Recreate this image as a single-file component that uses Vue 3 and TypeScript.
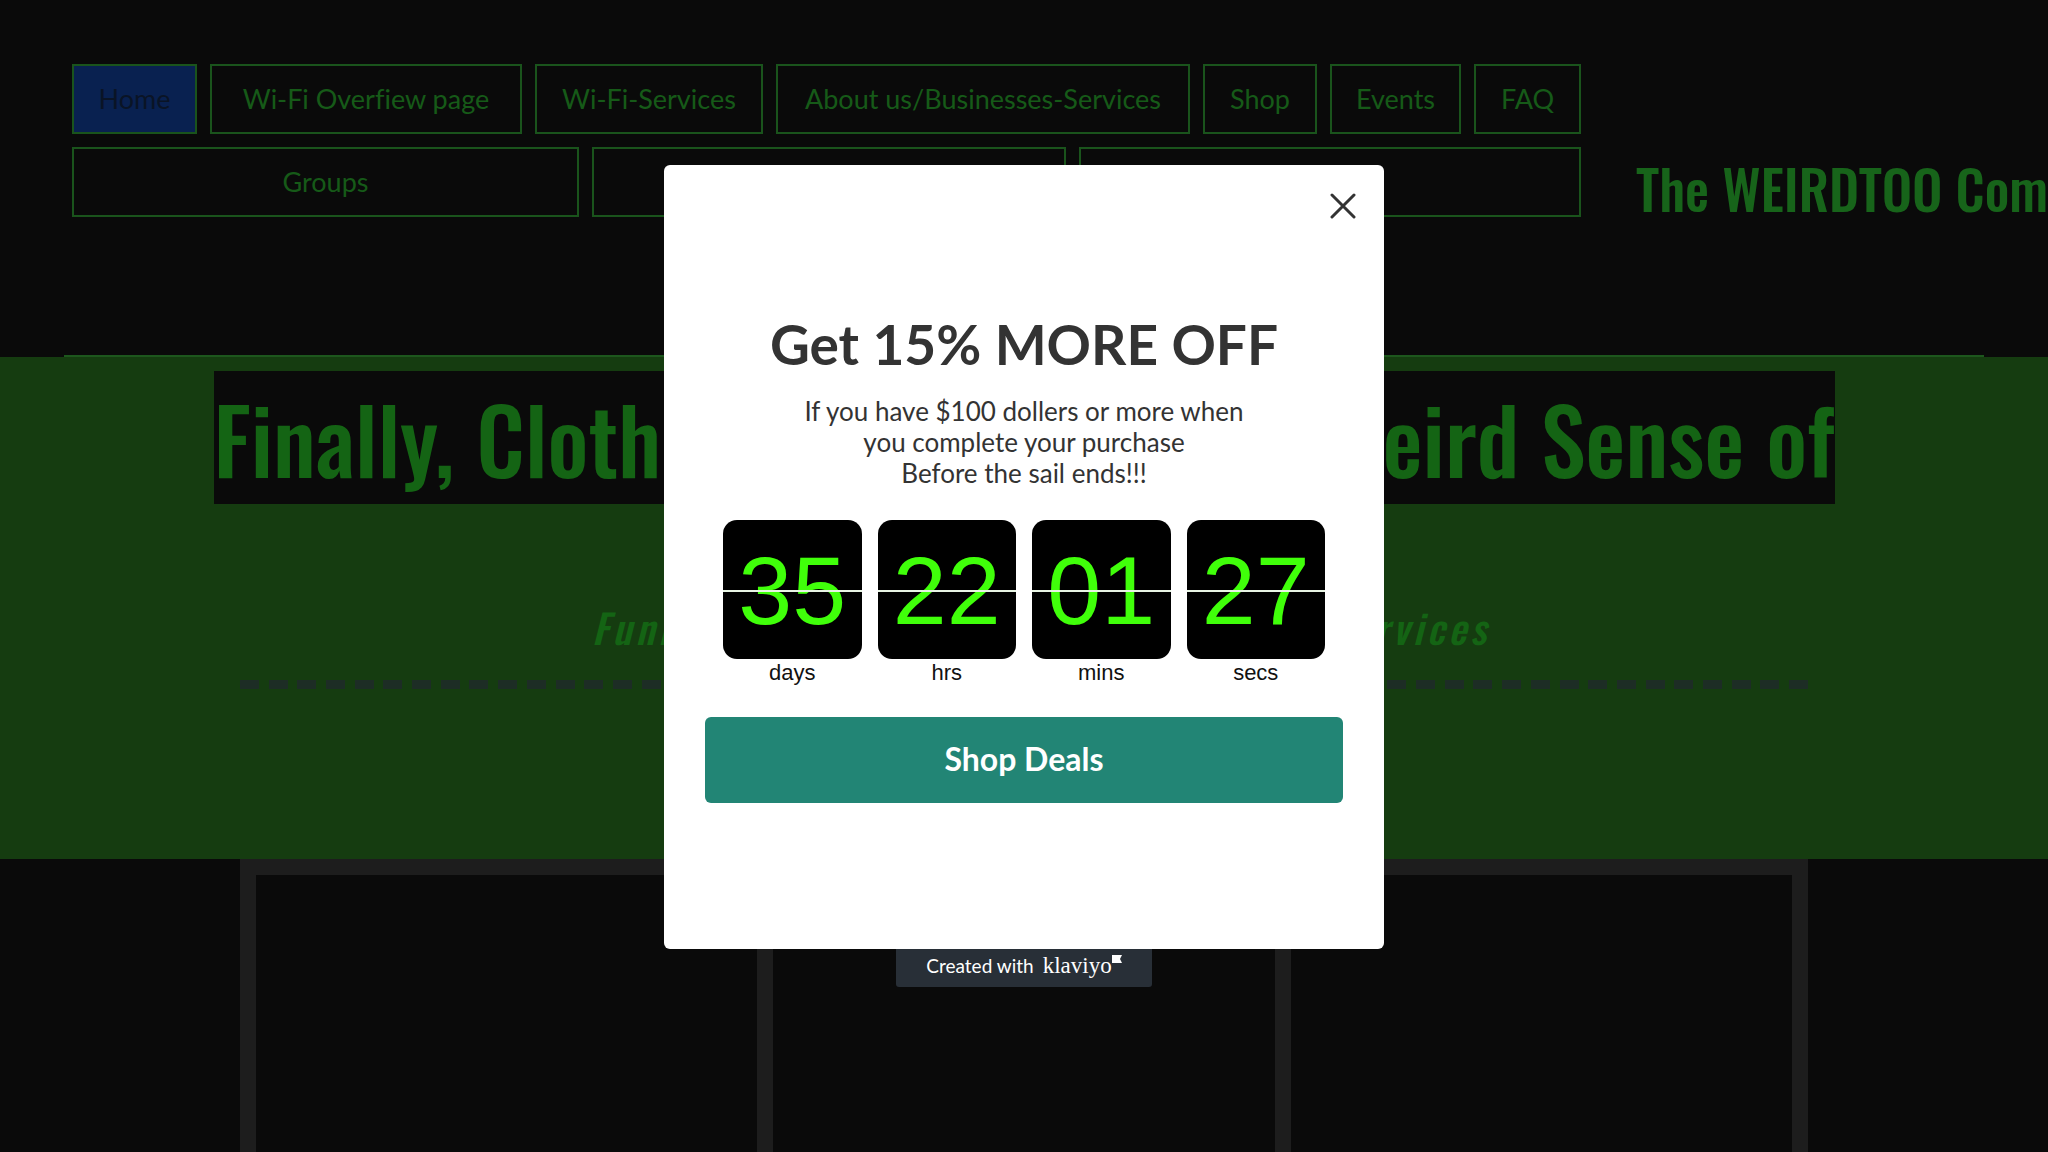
<script setup lang="ts">
interface TimeUnit {
  value: string
  label: string
}

const primaryLinks: string[] = [
  'Home',
  'Wi-Fi Overfiew page',
  'Wi-Fi-Services',
  'About us/Businesses-Services',
  'Shop',
  'Events',
  'FAQ',
]

const secondaryLinks: string[] = ['Groups', '', '']

const countdown: TimeUnit[] = [
  { value: '35', label: 'days' },
  { value: '22', label: 'hrs' },
  { value: '01', label: 'mins' },
  { value: '27', label: 'secs' },
]
</script>

<template>
  <div class="page">
    <header class="site-header">
      <nav class="site-nav">
        <div class="nav-row nav-row-primary">
          <a
            v-for="(link, index) in primaryLinks"
            :key="link"
            href="#"
            class="nav-link"
            :class="{ active: index === 0 }"
          >{{ link }}</a>
        </div>
        <div class="nav-row nav-row-secondary">
          <a v-for="(link, index) in secondaryLinks" :key="index" href="#" class="nav-link">{{ link }}</a>
        </div>
      </nav>
      <a href="#" class="site-title">The WEIRDTOO Com</a>
    </header>

    <section class="hero">
      <h1 class="hero-title"><span>Finally, Cloth</span><span>eird Sense of</span></h1>
      <p class="hero-subtitle"><span>Funn</span><span>rvices</span></p>
      <div class="hero-rule"></div>
    </section>

    <section class="gallery">
      <div v-for="n in 3" :key="n" class="gallery-cell"></div>
    </section>

    <div class="overlay">
      <div class="dialog" role="dialog" aria-labelledby="offer-title">
        <button type="button" class="close" aria-label="Close">
          <svg viewBox="0 0 26 26" width="26" height="26">
            <path d="M2 2 L24 24 M24 2 L2 24" fill="none" stroke="#333" stroke-width="3" stroke-linecap="round" />
          </svg>
        </button>
        <h2 id="offer-title" class="offer-title">Get 15% MORE OFF</h2>
        <p class="offer-text">
          If you have $100 dollers or more when<br />you complete your purchase<br />Before the sail ends!!!
        </p>
        <div class="countdown">
          <div v-for="unit in countdown" :key="unit.label" class="unit">
            <div class="card">{{ unit.value }}</div>
            <div class="unit-label">{{ unit.label }}</div>
          </div>
        </div>
        <button type="button" class="shop">Shop Deals</button>
      </div>
      <a href="#" class="badge">
        <span>Created with</span>
        <span class="brand">klaviyo<svg class="flag" viewBox="0 0 10 8" width="10" height="8">
          <path d="M0 0 H10 L8 4 L10 8 H0 Z" fill="#fff" />
        </svg></span>
      </a>
    </div>
  </div>
</template>

<style>
body {
  background: #0a0a0a;
}
</style>

<style scoped>
.page {
  display: flex;
  flex-direction: column;
  min-height: 100vh;
  overflow: hidden;
  background: #0a0a0a;
}

.page,
.page * {
  box-sizing: border-box;
}

a {
  text-decoration: none;
}

.site-header {
  display: flex;
  align-items: center;
  gap: 55px;
  min-height: 357px;
  margin: 0 64px;
  padding: 64px 0 43px 8px;
  border-bottom: 2px solid #1d571d;
}

.site-nav {
  display: flex;
  flex: 1;
  flex-direction: column;
  align-self: flex-start;
  gap: 13px;
  min-width: 0;
}

.nav-row {
  display: grid;
  gap: 13px;
}

.nav-row-primary {
  grid-template-columns: 125fr 312fr 228fr 414fr 114fr 131fr 107fr;
}

.nav-row-secondary {
  grid-template-columns: 507fr 474fr 502fr;
}

.nav-link {
  display: flex;
  align-items: center;
  justify-content: center;
  height: 70px;
  border: 2px solid #1a541c;
  color: #165a18;
  font: 400 27px/32px Lato, sans-serif;
  font-variant-ligatures: none;
  white-space: nowrap;
}

.nav-link.active {
  background: #092150;
  color: #0a1426;
}

/* The title keeps a narrow slot and runs out past the header's right edge. */
.site-title {
  flex: 0 0 348px;
  min-width: 0;
  color: #17641a;
  font: 500 54px/80px Oswald, sans-serif;
  white-space: nowrap;
}

.hero {
  display: flex;
  flex-direction: column;
  align-items: center;
  padding: 14px 0 170px;
  background: #153c10;
}

.hero-title {
  display: flex;
  justify-content: space-between;
  width: 100%;
  max-width: 1621px;
  margin: 0;
  background: #0a0a0a;
  color: #146414;
  font: 500 90px/133px Oswald, sans-serif;
  white-space: nowrap;
}

.hero-subtitle {
  display: flex;
  justify-content: space-between;
  width: 100%;
  max-width: 932px;
  margin: 94px 0 23px;
  padding-left: 34px;
  color: #146414;
  font: italic 500 40px/59px Oswald, sans-serif;
  letter-spacing: 4px;
  white-space: nowrap;
}

.hero-rule {
  width: 100%;
  max-width: 1568px;
  height: 9px;
  background: repeating-linear-gradient(90deg, #1d2d25 0 19px, transparent 19px calc((100% - 19px) / 54));
}

.gallery {
  display: grid;
  flex: 1;
  grid-template-columns: repeat(3, 1fr);
  gap: 16px;
  width: 100%;
  max-width: 1568px;
  margin: 0 auto;
  padding: 16px 16px 0;
  background: #1d1d1d;
}

.gallery-cell {
  background: #0a0a0a;
}

.overlay {
  position: fixed;
  inset: 0;
  display: flex;
  flex-direction: column;
  align-items: center;
  padding-top: 165px;
}

.dialog {
  position: relative;
  display: flex;
  flex-direction: column;
  width: 720px;
  padding: 146px 41px;
  border-radius: 6px;
  background: #fff;
  color: #333;
  text-align: center;
}

.close {
  position: absolute;
  top: 28px;
  right: 28px;
  display: flex;
  padding: 0;
  border: 0;
  background: none;
}

.offer-title {
  margin: 0 0 19px;
  font: 700 55px/66px Lato, sans-serif;
}

.offer-text {
  margin: 0 0 31px;
  font: 400 26px/31px Lato, sans-serif;
}

.countdown {
  display: grid;
  grid-template-columns: repeat(4, 1fr);
  gap: 16px;
  margin-bottom: 31px;
  padding: 0 18px;
}

.card {
  position: relative;
  height: 139px;
  border-radius: 14px;
  background: #000;
  color: #40ff0a;
  font: 400 97px/141px "Liberation Sans", Arial, sans-serif;
}

.card::after {
  position: absolute;
  top: 70px;
  left: 0;
  width: 100%;
  height: 2px;
  background: #e8f5e4;
  content: "";
}

.unit-label {
  color: #111;
  font: 400 22px/27px "Liberation Sans", Arial, sans-serif;
}

.shop {
  height: 86px;
  padding: 0 0 2px;
  border: 0;
  border-radius: 6px;
  background: #228575;
  color: #fff;
  font: 700 32px/38px Lato, sans-serif;
}

.badge {
  display: flex;
  align-items: baseline;
  justify-content: center;
  gap: 9px;
  width: 256px;
  height: 38px;
  border-radius: 0 0 3px 3px;
  background: #282f37;
  color: #fff;
  font: 400 19px/34px Lato, sans-serif;
}

.brand {
  display: flex;
  font: 400 23px/34px "Liberation Serif", serif;
}

.flag {
  margin-top: 6px;
}
</style>
